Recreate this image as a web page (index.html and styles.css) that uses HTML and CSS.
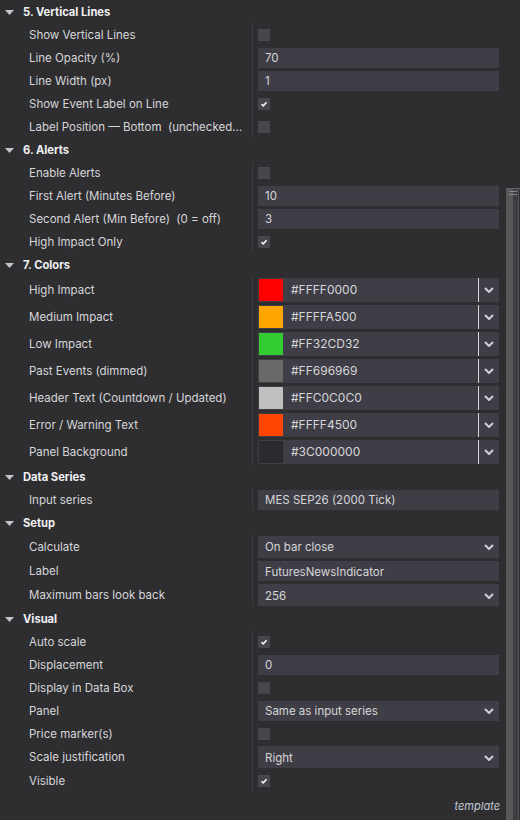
FILE: index.html
```html
<!DOCTYPE html>
<html>
<head>
<meta charset="utf-8">
<link rel="stylesheet" href="styles.css">
</head>
<body>
<div class="window">
  <div class="panel">
    <div class="sec-head"><svg class="tri" viewBox="0 0 9 5"><path d="M0 0H9L4.5 5Z"/></svg><span>5. Vertical Lines</span></div>
    <div class="row"><div class="lbl">Show Vertical Lines</div><div class="val"><span class="chk"></span></div></div>
    <div class="row"><div class="lbl">Line Opacity (%)</div><div class="val"><div class="field">70</div></div></div>
    <div class="row"><div class="lbl">Line Width (px)</div><div class="val"><div class="field">1</div></div></div>
    <div class="row"><div class="lbl">Show Event Label on Line</div><div class="val"><span class="chk on"><svg viewBox="0 0 12 12"><path d="M3.5 6.2L5.2 7.9L8.6 4.2"/></svg></span></div></div>
    <div class="row"><div class="lbl">Label Position — Bottom&nbsp; (unchecked = Top)</div><div class="val"><span class="chk"></span></div></div>

    <div class="sec-head"><svg class="tri" viewBox="0 0 9 5"><path d="M0 0H9L4.5 5Z"/></svg><span>6. Alerts</span></div>
    <div class="row"><div class="lbl">Enable Alerts</div><div class="val"><span class="chk"></span></div></div>
    <div class="row"><div class="lbl">First Alert (Minutes Before)</div><div class="val"><div class="field">10</div></div></div>
    <div class="row"><div class="lbl">Second Alert (Min Before)&nbsp; (0 = off)</div><div class="val"><div class="field">3</div></div></div>
    <div class="row"><div class="lbl">High Impact Only</div><div class="val"><span class="chk on"><svg viewBox="0 0 12 12"><path d="M3.5 6.2L5.2 7.9L8.6 4.2"/></svg></span></div></div>

    <div class="sec-head"><svg class="tri" viewBox="0 0 9 5"><path d="M0 0H9L4.5 5Z"/></svg><span>7. Colors</span></div>
    <div class="row crow"><div class="lbl">High Impact</div><div class="val"><div class="cfield"><span class="sw" style="background:#ff0000"></span><span class="ctext">#FFFF0000</span><span class="csep"></span><svg class="chev" viewBox="0 0 10 6"><path d="M1 1L5 5L9 1"/></svg></div></div></div>
    <div class="row crow"><div class="lbl">Medium Impact</div><div class="val"><div class="cfield"><span class="sw" style="background:#ffa500"></span><span class="ctext">#FFFFA500</span><span class="csep"></span><svg class="chev" viewBox="0 0 10 6"><path d="M1 1L5 5L9 1"/></svg></div></div></div>
    <div class="row crow"><div class="lbl">Low Impact</div><div class="val"><div class="cfield"><span class="sw" style="background:#32cd32"></span><span class="ctext">#FF32CD32</span><span class="csep"></span><svg class="chev" viewBox="0 0 10 6"><path d="M1 1L5 5L9 1"/></svg></div></div></div>
    <div class="row crow"><div class="lbl">Past Events (dimmed)</div><div class="val"><div class="cfield"><span class="sw" style="background:#696969"></span><span class="ctext">#FF696969</span><span class="csep"></span><svg class="chev" viewBox="0 0 10 6"><path d="M1 1L5 5L9 1"/></svg></div></div></div>
    <div class="row crow"><div class="lbl">Header Text (Countdown / Updated)</div><div class="val"><div class="cfield"><span class="sw" style="background:#c0c0c0"></span><span class="ctext">#FFC0C0C0</span><span class="csep"></span><svg class="chev" viewBox="0 0 10 6"><path d="M1 1L5 5L9 1"/></svg></div></div></div>
    <div class="row crow"><div class="lbl">Error / Warning Text</div><div class="val"><div class="cfield"><span class="sw" style="background:#ff4500"></span><span class="ctext">#FFFF4500</span><span class="csep"></span><svg class="chev" viewBox="0 0 10 6"><path d="M1 1L5 5L9 1"/></svg></div></div></div>
    <div class="row crow"><div class="lbl">Panel Background</div><div class="val"><div class="cfield"><span class="sw" style="background:#2a2a2f"></span><span class="ctext">#3C000000</span><span class="csep"></span><svg class="chev" viewBox="0 0 10 6"><path d="M1 1L5 5L9 1"/></svg></div></div></div>

    <div class="sec-head"><svg class="tri" viewBox="0 0 9 5"><path d="M0 0H9L4.5 5Z"/></svg><span>Data Series</span></div>
    <div class="row"><div class="lbl">Input series</div><div class="val"><div class="field">MES SEP26 (2000 Tick)</div></div></div>

    <div class="sec-head"><svg class="tri" viewBox="0 0 9 5"><path d="M0 0H9L4.5 5Z"/></svg><span>Setup</span></div>
    <div class="row drow first"><div class="lbl">Calculate</div><div class="val"><div class="field dd">On bar close<svg class="chev" viewBox="0 0 10 6"><path d="M1 1L5 5L9 1"/></svg></div></div></div>
    <div class="row drow"><div class="lbl">Label</div><div class="val"><div class="field">FuturesNewsIndicator</div></div></div>
    <div class="row drow"><div class="lbl">Maximum bars look back</div><div class="val"><div class="field dd">256<svg class="chev" viewBox="0 0 10 6"><path d="M1 1L5 5L9 1"/></svg></div></div></div>

    <div class="sec-head"><svg class="tri" viewBox="0 0 9 5"><path d="M0 0H9L4.5 5Z"/></svg><span>Visual</span></div>
    <div class="row"><div class="lbl">Auto scale</div><div class="val"><span class="chk on"><svg viewBox="0 0 12 12"><path d="M3.5 6.2L5.2 7.9L8.6 4.2"/></svg></span></div></div>
    <div class="row"><div class="lbl">Displacement</div><div class="val"><div class="field">0</div></div></div>
    <div class="row"><div class="lbl">Display in Data Box</div><div class="val"><span class="chk"></span></div></div>
    <div class="row"><div class="lbl">Panel</div><div class="val"><div class="field dd">Same as input series<svg class="chev" viewBox="0 0 10 6"><path d="M1 1L5 5L9 1"/></svg></div></div></div>
    <div class="row"><div class="lbl">Price marker(s)</div><div class="val"><span class="chk"></span></div></div>
    <div class="row drow"><div class="lbl">Scale justification</div><div class="val"><div class="field dd tall">Right<svg class="chev" viewBox="0 0 10 6"><path d="M1 1L5 5L9 1"/></svg></div></div></div>
    <div class="row"><div class="lbl">Visible</div><div class="val"><span class="chk on"><svg viewBox="0 0 12 12"><path d="M3.5 6.2L5.2 7.9L8.6 4.2"/></svg></span></div></div>

    <div class="footer">template</div>
  </div>
  <div class="vscroll"><div class="thumb"><span class="grip"></span></div></div>
</div>
</body>
</html>
```

FILE: styles.css
```css
html, body {
  margin: 0;
  padding: 0;
}
body {
  background: #2e2e31;
  font-family: Inter, "Noto Sans", "Liberation Sans", sans-serif;
  font-size: 11.5px;
  color: #d6d6d8;
}
.window {
  display: flex;
  width: 520px;
  height: 820px;
  overflow: hidden;
}
.panel {
  width: 506px;
  flex: none;
}
.sec-head {
  height: 23px;
  display: flex;
  align-items: center;
  font-weight: 700;
  font-size: 11.2px;
  color: #f0f0f2;
  padding-top: 1px;
  box-sizing: border-box;
}
.tri {
  width: 9px;
  height: 5px;
  margin-left: 5px;
  margin-right: 9px;
  fill: #c4c4c8;
}
.row {
  display: grid;
  grid-template-columns: 252px 254px;
  height: 23px;
}
.crow { height: 27px; }
.drow { height: 24px; }
.drow.first { height: 25px; }
.lbl {
  padding-left: 29px;
  padding-right: 8px;
  padding-top: 1px;
  line-height: 23px;
  align-self: center;
  white-space: nowrap;
  overflow: hidden;
  text-overflow: ellipsis;
}
.val {
  border-left: 1px solid #3b3b40;
  padding-left: 5px;
  display: flex;
  align-items: center;
}
.field {
  width: 241px;
  height: 20px;
  box-sizing: border-box;
  background: #3f3e46;
  padding-left: 7px;
  padding-right: 5px;
  padding-top: 1px;
  display: flex;
  align-items: center;
  color: #d6d6d8;
  white-space: nowrap;
}
.field.dd {
  justify-content: space-between;
}
.field.dd.tall, .drow .field.dd {
  height: 22px;
}
.chk {
  width: 12px;
  height: 12px;
  background: #47464e;
  display: block;
}
.chk svg {
  width: 12px;
  height: 12px;
  display: block;
  fill: none;
  stroke: #f4f4f4;
  stroke-width: 1.6;
}
.cfield {
  width: 241px;
  height: 24px;
  box-sizing: border-box;
  background: #3f3e46;
  display: flex;
  align-items: center;
  padding: 1px;
}
.sw {
  width: 24px;
  height: 22px;
  flex: none;
}
.ctext {
  margin-left: 8px;
  flex: 1;
  font-size: 12px;
  color: #d6d6d8;
}
.csep {
  width: 1px;
  height: 24px;
  background: #d8d8d8;
  margin-right: 5px;
}
.chev {
  width: 10px;
  height: 6px;
  flex: none;
  fill: none;
  stroke: #d0d0d4;
  stroke-width: 2;
}
.cfield .chev {
  margin-right: 4px;
}
.footer {
  height: 28px;
  display: flex;
  align-items: center;
  justify-content: flex-end;
  padding-right: 6px;
  font-style: italic;
  font-size: 11px;
  color: #c2cad4;
}
.vscroll {
  width: 14px;
  flex: none;
  padding-top: 188px;
  box-sizing: border-box;
}
.thumb {
  height: 100%;
  border-top: 1px solid #626266;
  background: linear-gradient(to right, #58585b 0 7px, #3e3e42 7px 12px, #55555a 12px 13px, #2e2e31 13px);
  display: flex;
  justify-content: center;
  padding-top: 2px;
  box-sizing: border-box;
}
.grip {
  width: 8px;
  height: 4px;
  border-top: 1px solid #88888c;
  border-bottom: 1px solid #88888c;
  box-sizing: border-box;
  margin-left: -1px;
}
```
